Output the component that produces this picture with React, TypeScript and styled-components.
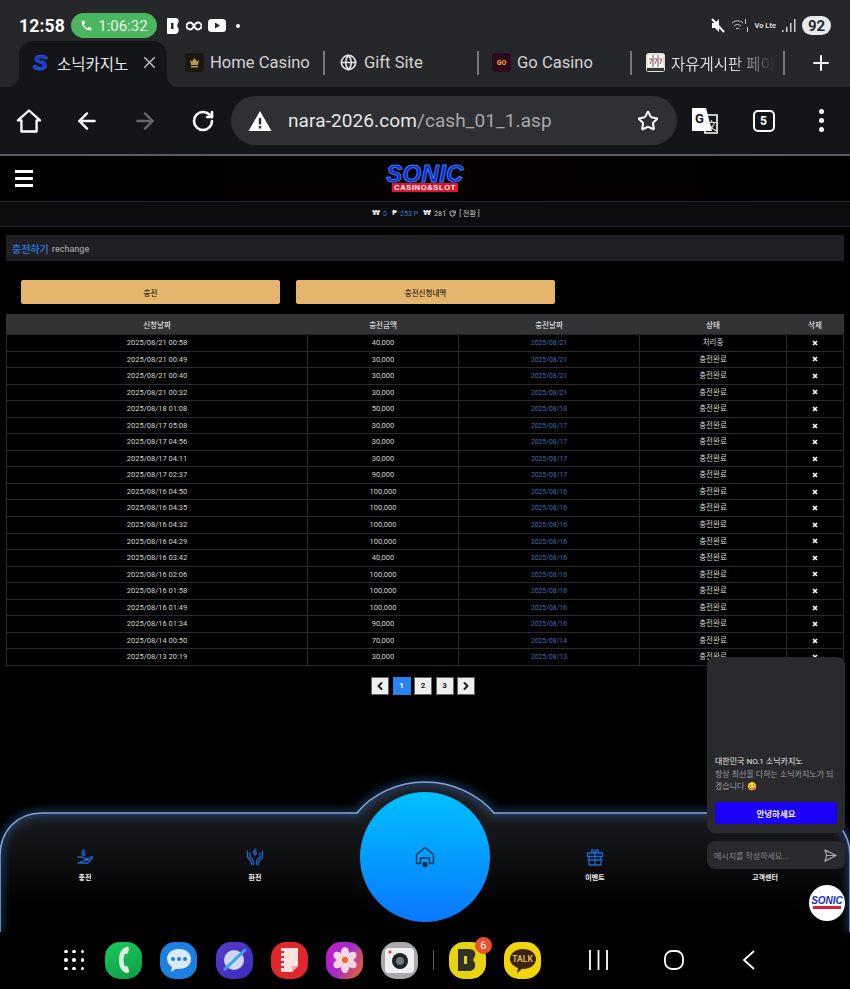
import React from "react";
import styled, { createGlobalStyle } from "styled-components";
import {
  ArrowLeft,
  ArrowRight,
  ChevronLeft,
  ChevronRight,
  Globe,
  Plus,
  RotateCw,
  Star,
  X,
} from "lucide-react";

const FONT = `Roboto, "Noto Sans CJK KR", sans-serif`;

const GlobalStyle = createGlobalStyle`
  html, body {
    margin: 0;
    padding: 0;
    background: #000;
  }
  * {
    box-sizing: border-box;
  }
  body {
    font-family: ${FONT};
  }
`;

const Page = styled.div`
  width: 850px;
  height: 989px;
  display: flex;
  flex-direction: column;
  overflow: hidden;
  background: #000;
`;

/* ---- status bar ---- */
const Chrome = styled.div`
  height: 87px;
  background: #26272b;
  flex: none;
`;
const StatusBar = styled.div`
  height: 41px;
  padding: 13px 19px 0;
  display: flex;
  align-items: flex-start;
  color: #fff;
`;
const Clock = styled.div`
  font-size: 17.5px;
  font-weight: 700;
  line-height: 26px;
  letter-spacing: 0.2px;
  width: 52px;
`;
const CallPill = styled.div`
  width: 86px;
  height: 25px;
  border-radius: 13px;
  background: #4cb560;
  display: flex;
  align-items: center;
  justify-content: center;
  gap: 5px;
  font-size: 15px;
  color: #e8f6ea;
`;
const StatusGlyphs = styled.div`
  height: 25px;
  display: flex;
  align-items: center;
  gap: 6px;
  margin-left: 10px;
`;
const StatusRight = styled.div`
  margin-left: auto;
  height: 25px;
  display: flex;
  align-items: center;
  gap: 6px;
`;
const Lte = styled.span`
  font-size: 7.5px;
  font-weight: 700;
  color: #ddd;
  white-space: nowrap;
`;
const Battery = styled.div`
  width: 29px;
  height: 19px;
  border-radius: 10px;
  background: #e9e9e9;
  color: #26272b;
  font-size: 15px;
  font-weight: 700;
  display: flex;
  align-items: center;
  justify-content: center;
`;

/* ---- tabs ---- */
const TabStrip = styled.div`
  height: 46px;
  display: flex;
  align-items: stretch;
  padding-left: 19px;
`;
const ActiveTab = styled.div`
  width: 148px;
  background: #141519;
  border-radius: 14px 14px 0 0;
  display: flex;
  align-items: center;
  padding: 0 8px 3px 14px;
  color: #e6e6e6;
  font-size: 15.5px;
  position: relative;
  &::before,
  &::after {
    content: "";
    position: absolute;
    bottom: 0;
    width: 12px;
    height: 12px;
  }
  &::before {
    left: -12px;
    background: radial-gradient(circle at 0 0, #26272b 12px, #141519 12.5px);
  }
  &::after {
    right: -12px;
    background: radial-gradient(circle at 100% 0, #26272b 12px, #141519 12.5px);
  }
`;
const TabClose = styled.span`
  margin-left: auto;
  display: flex;
  color: #b9b9bb;
`;
const SFavicon = styled.span`
  font: italic 900 22px "Liberation Sans", sans-serif;
  color: #1436d8;
  -webkit-text-stroke: 0.6px #3b62ff;
  width: 24px;
`;
const Tab = styled.div<{ $width: number }>`
  width: ${(p) => p.$width}px;
  flex: none;
  display: flex;
  align-items: center;
  gap: 6px;
  padding-bottom: 3px;
  color: #d2d2d4;
  font-size: 16.6px;
  white-space: nowrap;
  overflow: hidden;
`;
const TabFirst = styled(Tab)`
  margin-left: 18px;
`;
const GlobeTab = styled(Tab)`
  gap: 7px;
`;
const TabDivider = styled.div<{ $right: number }>`
  width: 2px;
  height: 24px;
  align-self: center;
  margin-top: -3px;
  background: #77787c;
  flex: none;
  margin-right: ${(p) => p.$right}px;
`;
const FadeText = styled.span`
  font-size: 15.5px;
  background: linear-gradient(90deg, #ddd 60%, #26272b 100%);
  -webkit-background-clip: text;
  background-clip: text;
  color: transparent;
`;
const NewTab = styled.div`
  margin-left: 24px;
  padding-bottom: 3px;
  display: flex;
  align-items: center;
  color: #fff;
`;
const Favicon = styled.div<{ $bg: string }>`
  width: 19px;
  height: 19px;
  border-radius: 3px;
  background: ${(p) => p.$bg};
  display: flex;
  align-items: center;
  justify-content: center;
  flex: none;
`;
const GoMark = styled.span`
  font-size: 7px;
  font-weight: 900;
  color: #f09a3c;
`;

/* ---- toolbar ---- */
const Toolbar = styled.div`
  height: 67px;
  flex: none;
  background: #141519;
  display: flex;
  align-items: center;
  color: #fff;
`;
const ToolSlot = styled.div<{ $width: number }>`
  width: ${(p) => p.$width}px;
  flex: none;
  display: flex;
  justify-content: center;
  align-items: center;
`;
const UrlBar = styled.div`
  width: 446px;
  height: 49px;
  flex: none;
  margin-left: -1px;
  border-radius: 25px;
  background: #2f3034;
  display: flex;
  align-items: center;
  padding: 0 18px 0 17px;
`;
const UrlText = styled.div`
  margin-left: 16px;
  font-size: 19px;
  letter-spacing: 0.1px;
  color: #a8a8ab;
  flex: 1;
  white-space: nowrap;
  b {
    color: #e6e6e6;
    font-weight: 400;
  }
`;
const TabCount = styled.div`
  width: 22px;
  height: 22px;
  border: 2px solid #fff;
  border-radius: 5px;
  font-size: 12px;
  font-weight: 700;
  display: flex;
  align-items: center;
  justify-content: center;
`;
const Dots = styled.div`
  display: flex;
  flex-direction: column;
  gap: 4px;
  i {
    width: 5px;
    height: 5px;
    border-radius: 50%;
    background: #fff;
  }
`;

/* ---- site ---- */
const Site = styled.div`
  position: relative;
  flex: 1;
  min-height: 0;
  overflow: hidden;
  border-top: 2px solid #5b5c66;
  background: #000;
  color: #fff;
`;
const SiteHeader = styled.div`
  height: 46px;
  border-bottom: 1px solid #24243a;
  background: linear-gradient(90deg, #000 0%, #060204 60%, #000 100%);
  display: flex;
  align-items: center;
  justify-content: center;
  position: relative;
`;
const Burger = styled.div`
  position: absolute;
  left: 15px;
  top: 14px;
  width: 18px;
  display: flex;
  flex-direction: column;
  gap: 4px;
  i {
    height: 3px;
    background: #fff;
  }
`;
const Logo = styled.div`
  width: 78px;
  display: flex;
  flex-direction: column;
  align-items: center;
  margin-top: -1px;
`;
const LogoWord = styled.div`
  font: italic 900 24px/19px "Liberation Sans", sans-serif;
  letter-spacing: 0.3px;
  color: #0d2bc4;
  -webkit-text-stroke: 1px #3f78ff;
`;
const LogoSub = styled.div`
  background: #e0122c;
  font: 700 7.6px/9px "Liberation Sans", sans-serif;
  letter-spacing: 0.6px;
  color: #fff;
  padding: 0 2px;
`;
const InfoBar = styled.div`
  height: 25px;
  padding-bottom: 2px;
  border-bottom: 1px solid #26262e;
  background: #0c0c0f;
  display: flex;
  align-items: center;
  justify-content: center;
  gap: 3px;
  font-size: 7.2px;
  color: #ccc;
`;
const InfoMark = styled.b`
  font-family: "DejaVu Sans", sans-serif;
  color: #eee;
  font-size: 7px;
  margin-left: 2px;
`;
const InfoValue = styled.span`
  color: #2a78d8;
`;
const Content = styled.div`
  padding: 8px 6px 0;
`;
const TitleBar = styled.div`
  height: 26px;
  background: #202024;
  display: flex;
  align-items: center;
  padding: 1px 0 0 6px;
  gap: 3px;
`;
const TitleMain = styled.span`
  color: #2470d0;
  font-size: 10px;
  font-weight: 700;
`;
const TitleSub = styled.span`
  color: #9a9a9e;
  font-size: 9px;
  font-weight: 500;
`;
const ActionRow = styled.div`
  display: flex;
  gap: 16px;
  padding: 19px 0 10px 15px;
`;
const ActionButton = styled.div`
  width: 259px;
  height: 24px;
  border-radius: 2px;
  background: #e5b56d;
  color: #2c2416;
  font-size: 7.5px;
  font-weight: 500;
  display: flex;
  align-items: center;
  justify-content: center;
`;
const Table = styled.table`
  width: 837px;
  border-collapse: collapse;
  table-layout: fixed;
  font-size: 7.5px;
  border-top: 1px solid #55555a;
`;
const HeadCell = styled.th`
  height: 20px;
  padding: 0;
  background: #333336;
  color: #ddd;
  font-weight: 500;
  border: 1px solid #333336;
  border-bottom-color: #222;
`;
const Row = styled.tr`
  height: 16.55px;
`;
const Cell = styled.td<{ $blue?: boolean }>`
  padding: ${(p) => (p.$blue ? "1px 0 0" : "0")};
  text-align: center;
  vertical-align: middle;
  border: 1px solid #2a2a30;
  color: ${(p) => (p.$blue ? "#3f6fae" : "#d4d4d4")};
  font-size: ${(p) => (p.$blue ? "6.8px" : "7.5px")};
  line-height: ${(p) => (p.$blue ? "14.5px" : "15.5px")};
  svg {
    display: block;
    margin: 0 auto;
  }
`;
const Pager = styled.div`
  display: flex;
  justify-content: center;
  gap: 3.5px;
  padding-top: 11px;
  margin-left: -4px;
`;
const PageButton = styled.div<{ $active?: boolean }>`
  width: 18px;
  height: 18px;
  border: 1px solid ${(p) => (p.$active ? "#2a7be8" : "#666")};
  background: ${(p) => (p.$active ? "#2a84f0" : "#efefef")};
  color: ${(p) => (p.$active ? "#fff" : "#222")};
  font-size: 8px;
  font-weight: 700;
  display: flex;
  align-items: center;
  justify-content: center;
`;

/* ---- fixed bottom nav, lies over the page ---- */
const BottomNav = styled.nav`
  position: absolute;
  left: 0;
  right: 0;
  bottom: 0;
  height: 160px;
`;
const NavShape = styled.svg`
  position: absolute;
  inset: 0;
`;
const NavGrid = styled.div`
  position: relative;
  height: 100%;
  display: grid;
  grid-template-columns: repeat(5, 1fr);
  padding-top: 76px;
`;
const NavItem = styled.div`
  display: flex;
  flex-direction: column;
  align-items: center;
  gap: 6px;
  font-size: 7px;
  font-weight: 700;
  color: #eee;
  svg {
    height: 18px;
    width: 18px;
  }
`;
const NavIconSpace = styled.div`
  height: 18px;
`;
const HomeOrb = styled.div`
  position: absolute;
  left: 360px;
  top: 20px;
  width: 130px;
  height: 130px;
  border-radius: 50%;
  background: linear-gradient(180deg, #00c0ff 0%, #0a78ff 100%);
  display: flex;
  align-items: center;
  justify-content: center;
`;

/* ---- chat popup ---- */
const ChatCard = styled.div`
  position: absolute;
  left: 707px;
  top: 501px;
  width: 138px;
  height: 176px;
  border-radius: 8px;
  background: #2a2a2e;
  padding: 98px 8px 0;
  display: flex;
  flex-direction: column;
`;
const ChatTitle = styled.div`
  font-size: 8px;
  line-height: 13px;
  color: #e6e6e6;
  white-space: nowrap;
`;
const ChatText = styled.div`
  margin-top: 1px;
  font-size: 8px;
  line-height: 11.5px;
  color: #9b9b9f;
`;
const ChatButton = styled.div`
  margin-top: 10px;
  height: 22px;
  border-radius: 3px;
  background: #1a00f5;
  color: #eee;
  font-size: 8.5px;
  font-weight: 700;
  display: flex;
  align-items: center;
  justify-content: center;
`;
const ChatInput = styled.div`
  position: absolute;
  left: 707px;
  top: 685px;
  width: 138px;
  height: 28px;
  border-radius: 8px;
  background: #2a2a2e;
  color: #85858a;
  font-size: 8px;
  display: flex;
  align-items: center;
  justify-content: space-between;
  padding: 0 7px;
`;
const ChatBubble = styled.div`
  position: absolute;
  left: 809px;
  top: 729px;
  width: 36px;
  height: 36px;
  border-radius: 50%;
  background: #fff;
  display: flex;
  flex-direction: column;
  align-items: center;
  justify-content: center;
`;
const BubbleWord = styled.div`
  font: italic 900 10px/8px "Liberation Sans", sans-serif;
  color: #1730c0;
`;
const BubbleSub = styled.div`
  width: 28px;
  height: 3px;
  margin-top: 1px;
  background: #d8203c;
`;

/* ---- android dock ---- */
const Dock = styled.div`
  height: 57px;
  flex: none;
  background: #000;
  display: flex;
  align-items: center;
  padding: 0 0 1px 64px;
`;
const AppGrid = styled.div`
  width: 20px;
  display: grid;
  grid-template-columns: repeat(3, 3.5px);
  justify-content: space-between;
  row-gap: 5px;
  margin-right: 21px;
  i {
    height: 3.5px;
    border-radius: 50%;
    background: #fff;
  }
`;
const AppIcon = styled.div<{ $bg: string }>`
  position: relative;
  width: 37px;
  height: 37px;
  border-radius: 15px;
  background: ${(p) => p.$bg};
  flex: none;
  margin-right: 18.3px;
  display: flex;
  align-items: center;
  justify-content: center;
`;
const DockDivider = styled.div`
  width: 1px;
  height: 20px;
  background: #666;
  flex: none;
  margin: 0 15px 0 -4px;
`;
const Badge = styled.div`
  position: absolute;
  top: -5px;
  right: -6px;
  width: 17px;
  height: 17px;
  border-radius: 50%;
  background: #e8502e;
  color: #fff;
  font-size: 11px;
  display: flex;
  align-items: center;
  justify-content: center;
`;
const TalkText = styled.span`
  position: absolute;
  top: 12px;
  font-size: 8.5px;
  font-weight: 700;
  color: #d8b65a;
`;
const SysNav = styled.div`
  margin-left: 2px;
  display: grid;
  grid-template-columns: repeat(3, 75px);
  justify-items: center;
  align-items: center;
`;

const rows: [string, string, string, string][] = [
  ["2025/08/21 00:58", "40,000", "2025/08/21", "처리중"],
  ["2025/08/21 00:49", "30,000", "2025/08/21", "충전완료"],
  ["2025/08/21 00:40", "30,000", "2025/08/21", "충전완료"],
  ["2025/08/21 00:32", "30,000", "2025/08/21", "충전완료"],
  ["2025/08/18 01:08", "50,000", "2025/08/18", "충전완료"],
  ["2025/08/17 05:08", "30,000", "2025/08/17", "충전완료"],
  ["2025/08/17 04:56", "30,000", "2025/08/17", "충전완료"],
  ["2025/08/17 04:11", "30,000", "2025/08/17", "충전완료"],
  ["2025/08/17 02:37", "90,000", "2025/08/17", "충전완료"],
  ["2025/08/16 04:50", "100,000", "2025/08/16", "충전완료"],
  ["2025/08/16 04:35", "100,000", "2025/08/16", "충전완료"],
  ["2025/08/16 04:32", "100,000", "2025/08/16", "충전완료"],
  ["2025/08/16 04:29", "100,000", "2025/08/16", "충전완료"],
  ["2025/08/16 03:42", "40,000", "2025/08/16", "충전완료"],
  ["2025/08/16 02:06", "100,000", "2025/08/16", "충전완료"],
  ["2025/08/16 01:58", "100,000", "2025/08/16", "충전완료"],
  ["2025/08/16 01:49", "100,000", "2025/08/16", "충전완료"],
  ["2025/08/16 01:34", "90,000", "2025/08/16", "충전완료"],
  ["2025/08/14 00:50", "70,000", "2025/08/14", "충전완료"],
  ["2025/08/13 20:19", "30,000", "2025/08/13", "충전완료"],
];

const BLUE = "#1f66d0";

const DeleteMark = () => (
  <svg width="6" height="6" viewBox="0 0 6 6">
    <path d="M1 1l4 4M5 1L1 5" stroke="#fff" strokeWidth="1.6" />
  </svg>
);

const HomeIcon = ({ size = 28 }: { size?: number }) => (
  <svg width={size} height={size} viewBox="0 0 24 24" fill="none" stroke="#fff" strokeWidth="2" strokeLinejoin="round">
    <path d="M12 3L2.5 11.5h3V21h13v-9.5h3z" />
  </svg>
);

const WarningIcon = () => (
  <svg width="24" height="22" viewBox="0 0 24 22">
    <path d="M12 1L23.500 21H.5z" fill="#fff" />
    <path d="M10.800 8h2.400v6.500h-2.400zM10.800 16h2.400v2.400h-2.400z" fill="#2f3034" />
  </svg>
);

const MuteIcon = () => (
  <svg width="15" height="15" viewBox="0 0 15 15">
    <path d="M1 5h3l4-4v13l-4-4H1z" fill="#fff" transform="translate(1 0)" />
    <path d="M2 1l12 13" stroke="#fff" strokeWidth="2" />
  </svg>
);

const HandCoin = () => (
  <svg viewBox="0 0 18 18" fill="none" stroke={BLUE} strokeWidth="1.3" strokeLinejoin="round" strokeLinecap="round">
    <path d="M2 9h4l3 1.500h2.500c.8 0 .8 1.800 0 1.800H8.500M11.800 11l3.600-2.200c1-.4 1.600.8.800 1.400l-4.500 4.800H2z" />
    <path d="M7.500 1.500v1M9 3.200H7a.9.9 0 000 1.900h1a.9.9 0 010 1.900H6M7.500 7v.6" />
  </svg>
);

const HandsCoin = () => (
  <svg viewBox="0 0 18 18" fill="none" stroke={BLUE} strokeWidth="1.3" strokeLinejoin="round" strokeLinecap="round">
    <path d="M1.500 3v6l4 5v2.500M16.500 3v6l-4 5v2.500M4 5v4l3.500 3.500v4M14 5v4l-3.500 3.500v4" />
    <path d="M9 1v1M10.300 2.600H8.400a.9.9 0 000 1.800h1.200a.9.9 0 010 1.800H7.600M9 6.200v1" />
  </svg>
);

const GiftIcon = () => (
  <svg viewBox="0 0 18 18" fill="none" stroke={BLUE} strokeWidth="1.3" strokeLinejoin="round">
    <path d="M1.500 5h15v3.500h-15zM3 8.500h12V17H3zM9 5v12M1.500 12h15" />
    <path d="M9 5C7 5 5 4 5.500 2.500S8 1.500 9 5zm0 0c2 0 4-1 3.500-2.500S10 1.500 9 5z" />
  </svg>
);

const Send = () => (
  <svg width="15" height="15" viewBox="0 0 16 16" fill="none" stroke="#a8a8ac" strokeWidth="1.3" strokeLinejoin="round">
    <path d="M2 2l12 6-12 6 2-6zM4 8h10" />
  </svg>
);

const NAV_EDGE = "M0 160V84C0 58 18 41 42 41H357C372 22 398 10 425 10S478 22 494 41H808C832 41 850 58 850 84V160";

const dots = Array.from({ length: 9 });

export default function App() {
  return (
    <Page>
      <GlobalStyle />
      <Chrome>
        <StatusBar>
          <Clock>12:58</Clock>
          <CallPill>
            <svg width="13" height="13" viewBox="0 0 24 24" fill="#fff">
              <path d="M6.600 10.800a15 15 0 006.600 6.600l2.200-2.200c.3-.3.7-.4 1-.2 1.100.4 2.300.6 3.600.6.6 0 1 .4 1 1V20c0 .6-.4 1-1 1C10.600 21 3 13.400 3 4c0-.6.4-1 1-1h3.500c.6 0 1 .4 1 1 0 1.300.2 2.500.6 3.600.1.300 0 .7-.2 1z" />
            </svg>
            1:06:32
          </CallPill>
          <StatusGlyphs>
            <svg width="13" height="18" viewBox="0 0 13 18">
              <path d="M0 1h8c3 0 4 2 3.500 4L10 8.500l1.500 3c.7 2.500-.5 5.500-3.500 5.500H0z" fill="#fff" />
              <path d="M4 6h2.500v6H4z" fill="#26272b" />
            </svg>
            <svg width="16" height="10" viewBox="0 0 16 10" fill="none" stroke="#fff" strokeWidth="1.800">
              <path d="M8 5C6.500 2 5.500 1.500 4 1.500a3.500 3.500 0 000 7C5.500 8.500 6.500 8 8 5c1.500-3 2.500-3.500 4-3.500a3.500 3.500 0 010 7C10.500 8.500 9.500 8 8 5z" />
            </svg>
            <svg width="18" height="13" viewBox="0 0 18 13">
              <rect width="18" height="13" rx="3.500" fill="#fff" />
              <path d="M7 3.500l5 3-5 3z" fill="#26272b" />
            </svg>
            <svg width="4" height="4" viewBox="0 0 4 4" style={{ marginLeft: 4 }}>
              <circle cx="2" cy="2" r="2" fill="#fff" />
            </svg>
          </StatusGlyphs>
          <StatusRight>
            <MuteIcon />
            <svg width="18" height="16" viewBox="0 0 18 16" fill="none" stroke="#ccc" strokeWidth="1">
              <path d="M1 5c3.500-3 8-3 11 0M3 8c2.500-2 5-2 7 0M5 11c1.500-1 2.500-1 3.500 0" />
              <path d="M14.500 1v5M16.500 9v5" />
            </svg>
            <Lte>Vo Lte</Lte>
            <svg width="14" height="15" viewBox="0 0 14 15" fill="#ccc">
              <path d="M0 12h1.500v2H0zM4 9h1.500v5H4zM8 5h1.500v9H8zM12 1h1.500v13H12z" />
            </svg>
            <Battery>92</Battery>
          </StatusRight>
        </StatusBar>
        <TabStrip>
          <ActiveTab>
            <SFavicon>S</SFavicon>
            소닉카지노
            <TabClose>
              <X size={19} strokeWidth={2} />
            </TabClose>
          </ActiveTab>
          <TabFirst $width={138}>
            <Favicon $bg="#1b1710">
              <svg width="11" height="11" viewBox="0 0 11 11" fill="#b89a4a">
                <path d="M1 3l2 1.500L5.500 1 8 4.500 10 3 9 8H2zM2 9h7v1.500H2z" />
              </svg>
            </Favicon>
            Home Casino
          </TabFirst>
          <TabDivider $right={15} />
          <GlobeTab $width={137}>
            <Globe size={17} color="#e0e0e0" strokeWidth={2.4} />
            Gift Site
          </GlobeTab>
          <TabDivider $right={13} />
          <Tab $width={138}>
            <Favicon $bg="#2a0a1c">
              <GoMark>GO</GoMark>
            </Favicon>
            Go Casino
          </Tab>
          <TabDivider $right={14} />
          <Tab $width={137}>
            <Favicon $bg="#e6e2d2">
              <svg width="17" height="17" viewBox="0 0 17 17">
                <path d="M1 1h15v12H1z" fill="#fff" />
                <path d="M6 1v12M11 1v12" stroke="#555" strokeWidth="1" />
                <path d="M2 5h3l-2 5M7 5h3l-2 5M12 5h3l-2 5" fill="none" stroke="#c44" strokeWidth="1" />
                <path d="M0 14h17v3H0z" fill="#333" />
              </svg>
            </Favicon>
            <FadeText>자유게시판 페이</FadeText>
          </Tab>
          <TabDivider $right={0} />
          <NewTab>
            <Plus size={24} strokeWidth={2} />
          </NewTab>
        </TabStrip>
      </Chrome>
      <Toolbar>
        <ToolSlot $width={58}>
          <HomeIcon />
        </ToolSlot>
        <ToolSlot $width={58}>
          <ArrowLeft size={26} strokeWidth={2.2} />
        </ToolSlot>
        <ToolSlot $width={58}>
          <ArrowRight size={26} strokeWidth={2.2} color="#66676a" />
        </ToolSlot>
        <ToolSlot $width={58}>
          <RotateCw size={24} strokeWidth={2.6} />
        </ToolSlot>
        <UrlBar>
          <WarningIcon />
          <UrlText>
            <b>nara-2026.com</b>/cash_01_1.asp
          </UrlText>
          <Star size={22} strokeWidth={2.2} />
        </UrlBar>
        <ToolSlot $width={55}>
          <svg width="28" height="28" viewBox="0 0 28 28">
            <path d="M11 8h15v18H14z" fill="#141519" stroke="#fff" strokeWidth="1.600" />
            <path d="M1 1h14l6 23H1z" fill="#fff" />
            <text x="4" y="16" fontSize="13" fontWeight="700" fill="#141519" fontFamily="Roboto">G</text>
            <text x="15" y="23" fontSize="11" fill="#fff" fontFamily="Noto Sans CJK SC">文</text>
          </svg>
        </ToolSlot>
        <ToolSlot $width={63}>
          <TabCount>5</TabCount>
        </ToolSlot>
        <ToolSlot $width={52}>
          <Dots>
            <i />
            <i />
            <i />
          </Dots>
        </ToolSlot>
      </Toolbar>
      <Site>
        <SiteHeader>
          <Burger>
            <i />
            <i />
            <i />
          </Burger>
          <Logo>
            <LogoWord>SONIC</LogoWord>
            <LogoSub>CASINO&amp;SLOT</LogoSub>
          </Logo>
        </SiteHeader>
        <InfoBar>
          <InfoMark>₩</InfoMark>
          <InfoValue>0</InfoValue>
          <InfoMark>₱</InfoMark>
          <InfoValue>253 P</InfoValue>
          <InfoMark>₩</InfoMark>
          <span>281</span>
          <RotateCw size={7} color="#ddd" strokeWidth={3} />
          <span>[ 전환 ]</span>
        </InfoBar>
        <Content>
          <TitleBar>
            <TitleMain>충전하기</TitleMain>
            <TitleSub>rechange</TitleSub>
          </TitleBar>
          <ActionRow>
            <ActionButton>충전</ActionButton>
            <ActionButton>충전신청내역</ActionButton>
          </ActionRow>
          <Table>
            <colgroup>
              <col width={301} />
              <col width={151} />
              <col width={181} />
              <col width={147} />
              <col width={57} />
            </colgroup>
            <thead>
              <tr>
                <HeadCell>신청날짜</HeadCell>
                <HeadCell>충전금액</HeadCell>
                <HeadCell>충전날짜</HeadCell>
                <HeadCell>상태</HeadCell>
                <HeadCell>삭제</HeadCell>
              </tr>
            </thead>
            <tbody>
              {rows.map((r) => (
                <Row key={r[0]}>
                  <Cell>{r[0]}</Cell>
                  <Cell>{r[1]}</Cell>
                  <Cell $blue>{r[2]}</Cell>
                  <Cell>{r[3]}</Cell>
                  <Cell>
                    <DeleteMark />
                  </Cell>
                </Row>
              ))}
            </tbody>
          </Table>
          <Pager>
            <PageButton>
              <ChevronLeft size={12} strokeWidth={4} />
            </PageButton>
            <PageButton $active>1</PageButton>
            <PageButton>2</PageButton>
            <PageButton>3</PageButton>
            <PageButton>
              <ChevronRight size={12} strokeWidth={4} />
            </PageButton>
          </Pager>
        </Content>
        <BottomNav>
          <NavShape width="850" height="160" viewBox="0 0 850 160">
            <defs>
              <linearGradient id="navFill" x1="0" y1="0" x2="0" y2="1">
                <stop offset="0.2" stopColor="#1b1c20" />
                <stop offset="0.85" stopColor="#000" />
              </linearGradient>
              <filter id="navGlow" x="-5%" y="-20%" width="110%" height="140%">
                <feGaussianBlur stdDeviation="4" />
              </filter>
            </defs>
            <path d={`${NAV_EDGE}z`} fill="url(#navFill)" />
            <path d={NAV_EDGE} fill="none" stroke="#3f86e8" strokeWidth="5" opacity="0.5" filter="url(#navGlow)" />
            <path d={NAV_EDGE} fill="none" stroke="#7fa6dc" strokeWidth="1.600" />
          </NavShape>
          <NavGrid>
            <NavItem>
              <HandCoin />
              충전
            </NavItem>
            <NavItem>
              <HandsCoin />
              환전
            </NavItem>
            <div />
            <NavItem>
              <GiftIcon />
              이벤트
            </NavItem>
            <NavItem>
              <NavIconSpace />
              고객센터
            </NavItem>
          </NavGrid>
          <HomeOrb>
            <svg width="20" height="22" viewBox="0 0 20 22" fill="none" stroke="#16324f" strokeWidth="1.400" strokeLinejoin="round">
              <path d="M10 1.500L1.500 8.500v9h4V12h9v5.500h4v-9z" />
              <circle cx="10" cy="18.500" r="2" fill="#16324f" />
            </svg>
          </HomeOrb>
        </BottomNav>
        <ChatCard>
          <ChatTitle>대한민국 NO.1 소닉카지노</ChatTitle>
          <ChatText>항상 최선을 다하는 소닉카지노가 되겠습니다.😋</ChatText>
          <ChatButton>안녕하세요</ChatButton>
        </ChatCard>
        <ChatInput>
          메시지를 작성하세요...
          <Send />
        </ChatInput>
        <ChatBubble>
          <BubbleWord>SONIC</BubbleWord>
          <BubbleSub />
        </ChatBubble>
      </Site>
      <Dock>
        <AppGrid>
          {dots.map((_, i) => (
            <i key={i} />
          ))}
        </AppGrid>
        <AppIcon $bg="linear-gradient(160deg,#1cc95a,#0c9e48)">
          <svg width="14" height="28" viewBox="0 0 14 28">
            <path d="M9 1C4 3 2 8 2 14s2 11 7 13c2 .6 3-.4 3-2l-1-4c-.4-1.200-1.600-1-3-.5C7 18 6.500 16 6.500 14S7 10 8 7.500c1.400.5 2.600.7 3-.5l1-4c0-1.600-1-2.600-3-2z" fill="#d8f2df" />
          </svg>
        </AppIcon>
        <AppIcon $bg="#1d7fe0">
          <svg width="28" height="26" viewBox="0 0 28 26">
            <path d="M14 2c7 0 12 4 12 10s-5 10-12 10c-1 0-2 0-3-.2L6 25l1-5c-3-2-5-5-5-8C2 6 7 2 14 2z" fill="#dbe9f8" />
            <circle cx="8" cy="12" r="2" fill="#1d7fe0" />
            <circle cx="14" cy="12" r="2" fill="#1d7fe0" />
            <circle cx="20" cy="12" r="2" fill="#1d7fe0" />
          </svg>
        </AppIcon>
        <AppIcon $bg="linear-gradient(135deg,#5a3ad0,#3b2bb8)">
          <svg width="30" height="30" viewBox="0 0 30 30">
            <circle cx="15" cy="15" r="10" fill="#cfd6f2" />
            <path d="M6 24L26 5" stroke="#34a8e8" strokeWidth="3" strokeLinecap="round" />
          </svg>
        </AppIcon>
        <AppIcon $bg="#e0282c">
          <svg width="24" height="28" viewBox="0 0 24 28">
            <path d="M4 2h17v18l-6 6H4z" fill="#fbe4e0" />
            <path d="M15 26v-6h6z" fill="#f7a9a2" />
            <path d="M4 6h3M4 11h3M4 16h3M4 21h3" stroke="#e0282c" strokeWidth="2" />
          </svg>
        </AppIcon>
        <AppIcon $bg="linear-gradient(120deg,#d01ac8,#a02ad0 45%,#f06a18)">
          <svg width="28" height="28" viewBox="0 0 28 28">
            <g fill="#f7d6e4">
              <ellipse cx="14" cy="6.500" rx="4" ry="5.500" />
              <ellipse cx="14" cy="21.500" rx="4" ry="5.500" />
              <ellipse cx="14" cy="6.500" rx="4" ry="5.500" transform="rotate(60 14 14)" />
              <ellipse cx="14" cy="6.500" rx="4" ry="5.500" transform="rotate(120 14 14)" />
              <ellipse cx="14" cy="6.500" rx="4" ry="5.500" transform="rotate(240 14 14)" />
              <ellipse cx="14" cy="6.500" rx="4" ry="5.500" transform="rotate(300 14 14)" />
            </g>
            <circle cx="14" cy="14" r="3" fill="#f0661c" />
          </svg>
        </AppIcon>
        <AppIcon $bg="#a9a9ab">
          <svg width="29" height="25" viewBox="0 0 29 25">
            <rect width="29" height="25" rx="4" fill="#efefef" />
            <circle cx="15" cy="13" r="8" fill="#222" />
            <circle cx="15" cy="13" r="4" fill="#6a7a80" />
            <circle cx="5" cy="4" r="1.500" fill="#e0352c" />
          </svg>
        </AppIcon>
        <DockDivider />
        <AppIcon $bg="#e8d40e">
          <svg width="20" height="24" viewBox="0 0 20 24">
            <path d="M1 1h11c5 0 7 3 6 7l-2 4 2 3c1 5-2 8-6 8H1z" fill="#33302a" />
            <path d="M7 8h3v8H7z" fill="#e8d40e" />
          </svg>
          <Badge>6</Badge>
        </AppIcon>
        <AppIcon $bg="#f2d40a">
          <svg width="30" height="30" viewBox="0 0 30 30">
            <path d="M15 4c7 0 13 4 13 10s-6 10-13 10l-1 0-5 4 1-5C5 21 2 18 2 14 2 8 8 4 15 4z" fill="#3b2310" />
          </svg>
          <TalkText>TALK</TalkText>
        </AppIcon>
        <SysNav>
          <svg width="19" height="20" viewBox="0 0 19 20" stroke="#fff" strokeWidth="1.800">
            <path d="M1 0v20M9.500 0v20M18 0v20" />
          </svg>
          <svg width="20" height="20" viewBox="0 0 20 20" fill="none" stroke="#fff" strokeWidth="1.800">
            <rect x="1" y="1" width="18" height="18" rx="7" />
          </svg>
          <svg width="13" height="20" viewBox="0 0 13 20" fill="none" stroke="#fff" strokeWidth="1.800">
            <path d="M12 1L2 10l10 9" />
          </svg>
        </SysNav>
      </Dock>
    </Page>
  );
}
